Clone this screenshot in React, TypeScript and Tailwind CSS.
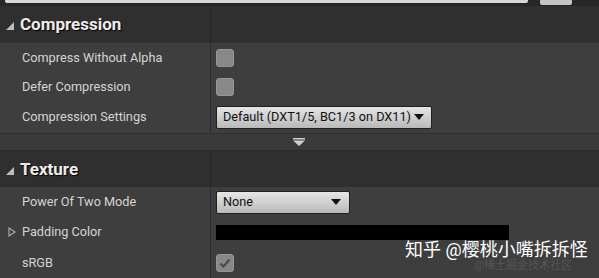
import React from "react";

const font = { fontFamily: "Roboto, 'Noto Sans CJK SC', sans-serif" };

function HeaderRow({ title }: { title: string }) {
	return (
		<div className="flex h-[36px] bg-[#2f2f2f]">
			<div className="flex w-[211px] items-center border-r border-[#262626]">
				<svg width="8" height="8" viewBox="0 0 8 8" className="ml-[6px] mr-[6px] mt-[3px]">
					<path d="M8 0 L8 8 L0 8 Z" fill="#bdbdbd" />
				</svg>
				<span className="mt-[2px] text-[17px] font-bold text-[#ececec] [text-shadow:1px_1px_1px_#000]">{title}</span>
			</div>
			<div className="flex-1" />
		</div>
	);
}

function PropRow({
	label,
	expander,
	children,
	h = "h-[29px]",
}: {
	label: string;
	expander?: boolean;
	children?: React.ReactNode;
	h?: string;
}) {
	return (
		<div className={`flex ${h} bg-[#3e3e3e]`}>
			<div className="relative flex w-[211px] items-center border-r border-[#2c2c2c] pl-[22px]">
				{expander && (
					<svg width="8" height="10" viewBox="0 0 8 10" className="absolute left-[8px] top-[10px]">
						<path d="M1 1 L7 5 L1 9 Z" fill="none" stroke="#a8a8a8" strokeWidth="1.2" />
					</svg>
				)}
				<span className="text-[12.7px] text-[#d4d4d4]">{label}</span>
			</div>
			<div className="flex flex-1 items-center pl-[5px]">{children}</div>
		</div>
	);
}

function Checkbox({ checked }: { checked?: boolean }) {
	return (
		<div className="flex h-[18px] w-[18px] items-center justify-center rounded-[3px] border border-[#969696] bg-[#888888]">
			{checked && (
				<svg width="12" height="10" viewBox="0 0 12 10">
					<path d="M1.5 5.5 L4.5 8.5 L10.5 1.5" fill="none" stroke="#4a4a4a" strokeWidth="2.2" />
				</svg>
			)}
		</div>
	);
}

function Combo({ text, w, tight }: { text: string; w: string; tight?: boolean }) {
	return (
		<div
			className={`flex h-[23px] ${w} items-center ${tight ? "" : "justify-between"} rounded-[2px] border border-[#202020] bg-gradient-to-b from-[#e6e6e6] to-[#b9b9b9] pl-[6px] pr-[8px]`}
		>
			<span className="whitespace-nowrap text-[12.7px] text-[#111]">{text}</span>
			<svg width="10" height="6" viewBox="0 0 10 6" className={`shrink-0 ${tight ? "ml-[3px]" : ""}`}>
				<path d="M0 0 L10 0 L5 6 Z" fill="#111" />
			</svg>
		</div>
	);
}

export default function App() {
	return (
		<div className="relative h-[278px] w-[599px] overflow-hidden bg-[#262626]" style={font}>
			{/* top search bar remnants */}
			<div className="flex h-[6px] items-start">
				<div className="ml-[5px] h-[3px] w-[523px] rounded-b-[2px] bg-[#d8d8d8]" />
				<div className="ml-[12px] h-[5px] w-[32px] rounded-b-[2px] bg-[#c4c4c4]" />
			</div>

			<HeaderRow title="Compression" />
			<div className="h-[1px] bg-[#333]" />
			<PropRow label="Compress Without Alpha">
				<Checkbox />
			</PropRow>
			<PropRow label="Defer Compression">
				<Checkbox />
			</PropRow>
			<PropRow label="Compression Settings" h="h-[32px]">
				<Combo text="Default (DXT1/5, BC1/3 on DX11)" w="w-[216px]" tight />
			</PropRow>

			{/* advanced expander strip */}
			<div className="h-[1px] bg-[#2e2e2e]" />
			<div className="flex h-[16px] items-center justify-center bg-[#3a3a3a]">
				<svg width="12" height="8" viewBox="0 0 12 8" className="mr-[2px]">
					<rect x="0" y="0" width="12" height="1.5" fill="#d0d0d0" />
					<path d="M0 2.5 L12 2.5 L6 8 Z" fill="#d0d0d0" />
				</svg>
			</div>
			<div className="h-[1px] bg-[#2a2a2a]" />

			<HeaderRow title="Texture" />
			<PropRow label="Power Of Two Mode" h="h-[30px]">
				<Combo text="None" w="w-[134px]" />
			</PropRow>
			<PropRow label="Padding Color" expander h="h-[30px]">
				<div className="h-[15px] w-[293px] bg-black" />
			</PropRow>
			<PropRow label="sRGB" h="h-[31px]">
				<Checkbox checked />
			</PropRow>

			{/* watermark */}
			<div className="absolute left-[405px] top-[240px] text-[18px] leading-[19px] text-white">
				知乎 @樱桃小嘴拆拆怪
			</div>
			<div className="absolute left-[474px] top-[260px] text-[11px] leading-[12px] text-[#555]">
				@稀土掘金技术社区
			</div>
		</div>
	);
}
